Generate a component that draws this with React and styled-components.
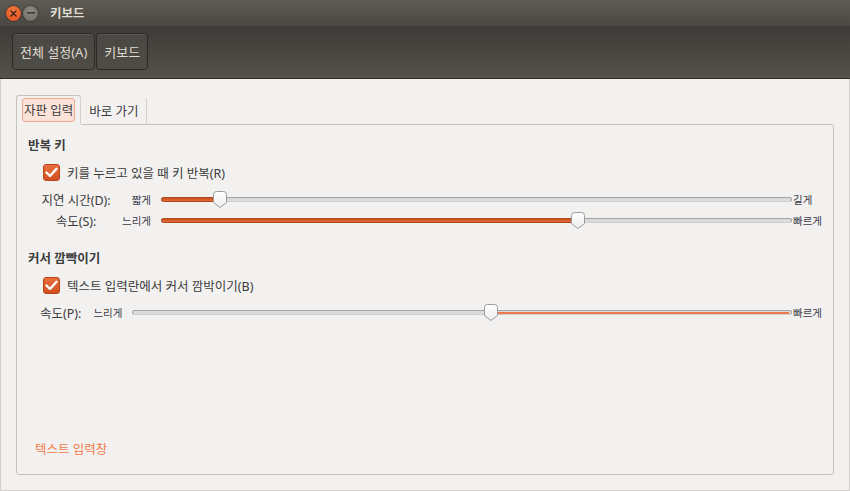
import React from 'react';
import styled, { createGlobalStyle } from 'styled-components';

const GlobalStyle = createGlobalStyle`
  html, body {
    margin: 0;
    padding: 0;
    background: #f2f1f0;
  }
  * {
    box-sizing: border-box;
  }
`;

const FONT = `"Noto Sans", "Noto Sans CJK KR", sans-serif`;

const Window = styled.div`
  width: 850px;
  height: 491px;
  display: flex;
  flex-direction: column;
  font-family: ${FONT};
  overflow: hidden;
`;

const TitleBar = styled.div`
  height: 26px;
  flex: none;
  display: flex;
  align-items: center;
  padding-left: 6px;
  background: linear-gradient(#5e5b53, #4a4842);
`;

const WinButton = styled.div`
  width: 15px;
  height: 15px;
  border-radius: 50%;
  margin-right: 2px;
  display: flex;
  align-items: center;
  justify-content: center;
  background: ${(p) =>
    p.$close
      ? 'radial-gradient(circle at 50% 35%, #f47a47, #df4b16)'
      : 'radial-gradient(circle at 50% 35%, #8e8b84, #6c6963)'};
  box-shadow: 0 0 0 1px rgba(0, 0, 0, 0.25);
`;

const Title = styled.div`
  margin-left: 10px;
  color: #dfdbd2;
  font-weight: bold;
  font-size: 12.5px;
  padding-bottom: 1px;
`;

const Toolbar = styled.div`
  height: 53px;
  flex: none;
  display: flex;
  align-items: center;
  padding: 0 0 1px 12px;
  gap: 1px;
  background: linear-gradient(#3c3b37, #56524a);
  border-bottom: 1px solid #2e2d29;
`;

const ToolButton = styled.div`
  height: 37px;
  padding: 0 7px;
  display: flex;
  align-items: center;
  border-radius: 4px;
  border: 1px solid #2b2a27;
  box-shadow: inset 0 1px 0 rgba(255, 255, 255, 0.08);
  background: linear-gradient(#4a4843, #4f4c46);
  color: #dfdbd2;
  font-size: 13px;
`;

const Content = styled.div`
  flex: 1;
  display: flex;
  flex-direction: column;
  padding: 16px 15px 15px 15px;
  background: #f2f1f0;
  border: 1px solid #d2cfcb;
  border-top: none;
`;

const Tabs = styled.div`
  display: flex;
  margin-bottom: -1px;
  position: relative;
  z-index: 1;
`;

const Tab = styled.div`
  padding: 0 5px;
  display: flex;
  align-items: center;
  color: #3c3c3c;
  font-size: 12.5px;
  background: #f2f1f0;
  border: 1px solid ${(p) => (p.$active ? '#c6c2be' : 'transparent')};
  border-right-color: #d4d0cc;
  border-bottom-color: ${(p) => (p.$active ? '#f2f1f0' : '#c6c2be')};
  border-radius: 3px 3px 0 0;
  margin-top: ${(p) => (p.$active ? '0' : '2px')};
  height: ${(p) => (p.$active ? '30px' : '28px')};
`;

const TabLabel = styled.span`
  padding: 1px 1px 2px;
  border-radius: 3px;
  background: ${(p) => (p.$focus ? '#fbe3d9' : 'transparent')};
  border: 1px solid ${(p) => (p.$focus ? '#f2a98c' : 'transparent')};
`;

const Panel = styled.div`
  flex: 1;
  display: flex;
  flex-direction: column;
  border: 1px solid #c6c2be;
  border-radius: 0 3px 3px 3px;
  padding: 12px 11px 16px 11px;
  color: #3c3c3c;
  font-size: 12.5px;
`;

const Heading = styled.div`
  font-weight: bold;
  height: 18px;
  line-height: 18px;
  margin-bottom: 8px;
`;

const CheckRow = styled.label`
  display: flex;
  align-items: center;
  gap: 7px;
  margin-left: 15px;
  height: 18px;
  margin-bottom: 10px;
`;

const Box = styled.span`
  width: 17px;
  height: 17px;
  border-radius: 3px;
  display: flex;
  align-items: center;
  justify-content: center;
  background: linear-gradient(#ea6f3f, #cf4f1f);
  border: 1px solid #b84418;
`;

const SliderGrid = styled.div`
  display: grid;
  grid-template-columns: 74px 38px 1fr auto;
  row-gap: 4px;
  align-items: center;
  margin-left: 11px;
  margin-bottom: 21px;
`;

const Cell = styled.div`
  height: 17px;
  display: flex;
  align-items: center;
  justify-content: ${(p) => p.$align || 'flex-start'};
`;

const Small = styled.span`
  font-size: 10.5px;
  color: #3c3c48;
`;

const FlexRow = styled.div`
  display: flex;
  align-items: center;
  height: 17px;
  margin-left: 12px;
`;

const RowLabel = styled.span`
  margin-right: 12px;
`;

const TrackWrap = styled.div`
  flex: 1;
  position: relative;
  height: 17px;
  margin: 0 1px 0 10px;
`;

const Track = styled.div`
  position: absolute;
  left: 0;
  right: 0;
  top: 6px;
  height: 5px;
  border-radius: 3px;
  border: 1px solid #a3a3a3;
  background: #dcdbda;
  border-bottom-color: #cfcfcf;
`;

const Fill = styled.div`
  position: absolute;
  top: 6px;
  height: 5px;
  border-radius: 3px;
  background: linear-gradient(#c8501f, #e46a3a);
  border: 1px solid #b24717;
`;

const ThinFill = styled.div`
  position: absolute;
  top: 8px;
  height: 1.5px;
  background: #ec7a4d;
`;

const Thumb = styled.svg`
  position: absolute;
  top: 0;
  width: 14px;
  height: 17px;
  margin-left: -7px;
`;

const Spacer = styled.div`
  flex: 1;
`;

const Link = styled.div`
  color: #f27a4a;
  margin-left: 7px;
  font-size: 12.5px;
`;

const Check = () => (
  <Box>
    <svg width="13" height="11" viewBox="0 0 13 11">
      <path d="M1.5 5.5 L5 9 L11.5 1.8" fill="none" stroke="#fff" strokeWidth="2.4" strokeLinecap="round" strokeLinejoin="round" />
    </svg>
  </Box>
);

const Slider = ({ value, inverted }) => {
  const pct = `${value * 100}%`;
  return (
    <TrackWrap>
      <Track />
      {inverted ? (
        <ThinFill style={{ left: pct, right: 3 }} />
      ) : (
        <Fill style={{ left: 0, width: pct }} />
      )}
      <Thumb style={{ left: pct }} viewBox="0 0 14 17">
        <defs>
          <linearGradient id="tg" x1="0" y1="0" x2="0" y2="1">
            <stop offset="0" stopColor="#ffffff" />
            <stop offset="1" stopColor="#eeeeec" />
          </linearGradient>
        </defs>
        <path d="M3.5 0.5 H10.5 Q13.5 0.5 13.5 3.5 V11.5 L7 16.5 L0.5 11.5 V3.5 Q0.5 0.5 3.5 0.5 Z" fill="url(#tg)" stroke="#9b9b9b" />
      </Thumb>
    </TrackWrap>
  );
};

const App = () => {
  return (
    <Window>
      <GlobalStyle />
      <TitleBar>
        <WinButton $close>
          <svg width="7" height="7" viewBox="0 0 7 7">
            <path d="M1 1 L6 6 M6 1 L1 6" stroke="#3a1d10" strokeWidth="1.4" strokeLinecap="round" />
          </svg>
        </WinButton>
        <WinButton>
          <svg width="8" height="2" viewBox="0 0 8 2">
            <rect x="0" y="0" width="8" height="1.6" fill="#3a3935" />
          </svg>
        </WinButton>
        <Title>키보드</Title>
      </TitleBar>
      <Toolbar>
        <ToolButton>전체 설정(A)</ToolButton>
        <ToolButton>키보드</ToolButton>
      </Toolbar>
      <Content>
        <Tabs>
          <Tab $active>
            <TabLabel $focus>자판 입력</TabLabel>
          </Tab>
          <Tab>
            <TabLabel>바로 가기</TabLabel>
          </Tab>
        </Tabs>
        <Panel>
          <Heading>반복 키</Heading>
          <CheckRow>
            <Check />
            키를 누르고 있을 때 키 반복(R)
          </CheckRow>
          <SliderGrid>
            <Cell $align="center">지연 시간(D):</Cell>
            <Cell $align="flex-end"><Small>짧게</Small></Cell>
            <Slider value={0.094} />
            <Cell><Small>길게</Small></Cell>
            <Cell $align="center">속도(S):</Cell>
            <Cell $align="flex-end"><Small>느리게</Small></Cell>
            <Slider value={0.661} />
            <Cell><Small>빠르게</Small></Cell>
          </SliderGrid>
          <Heading>커서 깜빡이기</Heading>
          <CheckRow>
            <Check />
            텍스트 입력란에서 커서 깜박이기(B)
          </CheckRow>
          <FlexRow>
            <RowLabel>속도(P):</RowLabel>
            <Small>느리게</Small>
            <Slider value={0.543} inverted />
            <Small>빠르게</Small>
          </FlexRow>
          <Spacer />
          <Link>텍스트 입력창</Link>
        </Panel>
      </Content>
    </Window>
  );
};

export default App;
